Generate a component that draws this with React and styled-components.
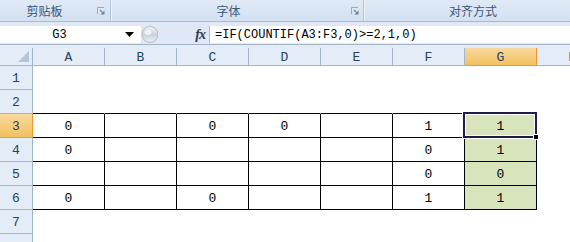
import React from "react";
import styled, { createGlobalStyle } from "styled-components";

const GlobalStyle = createGlobalStyle`
  html, body { margin: 0; padding: 0; background: #ffffff; overflow: hidden; }
  * { box-sizing: border-box; }
`;

const Page = styled.div`
  width: 570px;
  height: 242px;
  overflow: hidden;
  background: #ffffff;
`;

const Ribbon = styled.div`
  display: flex;
  height: 22px;
  background: linear-gradient(#e0eaf6, #d3e0f0);
  border-bottom: 1px solid #a7b8cf;
`;

const Group = styled.div`
  position: relative;
  flex: ${(p) => (p.$width ? `0 0 ${p.$width}px` : "1 1 auto")};
  display: flex;
  align-items: center;
  justify-content: center;
  padding-right: ${(p) => p.$padRight || 0}px;
  padding-left: ${(p) => p.$padLeft || 0}px;
  border-right: ${(p) => (p.$last ? "none" : "1px solid #b3c4da")};
  box-shadow: ${(p) => (p.$last ? "none" : "1px 0 0 #eef3fa")};
  font-family: "Noto Sans CJK SC", "Noto Sans", sans-serif;
  font-size: 12px;
  color: #3d5579;
`;

const Launcher = styled.svg`
  position: absolute;
  right: ${(p) => p.$right}px;
  top: 7px;
`;

const FormulaArea = styled.div`
  background: #dfe8f4;
  padding-top: 4px;
`;

const FormulaRow = styled.div`
  display: flex;
  height: 17px;
  align-items: stretch;
`;

const NameBox = styled.div`
  flex: 0 0 141px;
  background: #ffffff;
  display: flex;
  align-items: center;
  position: relative;
  font-family: "Liberation Mono", monospace;
  font-size: 12px;
  color: #000;
`;

const NameText = styled.span`
  flex: 1;
  text-align: center;
  padding-right: 22px;
`;

const DropArrow = styled.svg`
  position: absolute;
  right: 7px;
  top: 6px;
`;

const Knob = styled.svg`
  flex: 0 0 auto;
  margin-top: -1px;
`;

const FxCell = styled.div`
  flex: 0 0 52px;
  display: flex;
  align-items: center;
  justify-content: flex-end;
  padding-right: 4px;
  border-right: 1px solid #a9b9cf;
  font-family: "Liberation Serif", serif;
  font-style: italic;
  font-weight: bold;
  font-size: 14px;
  color: #2b3b5b;
  letter-spacing: -1px;
`;

const FormulaInput = styled.div`
  flex: 1;
  background: #ffffff;
  display: flex;
  align-items: center;
  padding-left: 5px;
  font-family: "Liberation Mono", monospace;
  font-size: 12px;
  color: #000;
  white-space: nowrap;
`;

const FormulaBottom = styled.div`
  height: 4px;
  border-top: 1px solid #a3b3c9;
  background: #e4ecf6;
  margin-top: 1px;
`;

const Sheet = styled.div`
  display: grid;
  grid-template-columns: 33px repeat(8, 72px);
  grid-template-rows: 18px repeat(8, 24px);
`;

const Corner = styled.div`
  background: #e4ecf7;
  border-right: 1px solid #9eb6ce;
  border-bottom: 1px solid #9eb6ce;
  position: relative;
`;

const CornerTri = styled.div`
  position: absolute;
  right: 3px;
  bottom: 3px;
  width: 0;
  height: 0;
  border-left: 11px solid transparent;
  border-bottom: 11px solid #b6c6da;
`;

const ColHead = styled.div`
  background: ${(p) =>
    p.$active ? "linear-gradient(#f9d99f, #f1c15f)" : "#e4ecf7"};
  border-right: 1px solid ${(p) => (p.$active ? "#f29536" : "#9eb6ce")};
  border-bottom: 1px solid ${(p) => (p.$active ? "#f29536" : "#9eb6ce")};
  display: flex;
  align-items: center;
  justify-content: center;
  font-family: "Liberation Mono", monospace;
  font-size: 13px;
  color: #27415f;
  padding-top: 1px;
`;

const RowHead = styled.div`
  background: ${(p) =>
    p.$active ? "linear-gradient(#f9d99f, #f1c15f)" : "#e4ecf7"};
  border-right: 1px solid ${(p) => (p.$active ? "#f29536" : "#9eb6ce")};
  border-bottom: 1px solid ${(p) => (p.$active ? "#f29536" : "#9eb6ce")};
  display: flex;
  align-items: flex-end;
  justify-content: center;
  padding-bottom: 3px;
  font-family: "Liberation Mono", monospace;
  font-size: 13px;
  color: #27415f;
`;

const Cell = styled.div`
  position: relative;
  background: ${(p) => (p.$fill ? "#d8e4bc" : "#ffffff")};
  border-right: 1px solid ${(p) => (p.$boxed ? "#000" : "transparent")};
  border-bottom: 1px solid
    ${(p) => (p.$boxed || p.$topEdge ? "#000" : "transparent")};
  display: flex;
  align-items: flex-end;
  justify-content: center;
  padding-bottom: 3px;
  font-family: "Liberation Mono", monospace;
  font-size: 13px;
  color: #000;
  z-index: ${(p) => (p.$selected ? 2 : 0)};
`;

const Selection = styled.div`
  position: absolute;
  left: -2px;
  top: -2px;
  right: -1px;
  bottom: -1px;
  border: 2px solid #1f1c4c;
  box-shadow: inset 0 0 0 1px #ffffff, 0 0 0 1px #ffffff;
  pointer-events: none;
`;

const Handle = styled.div`
  position: absolute;
  right: -4px;
  bottom: -4px;
  width: 6px;
  height: 6px;
  background: #000;
  border: 1px solid #ffffff;
`;

const COLS = ["A", "B", "C", "D", "E", "F", "G", "H"];

const DATA = {
  3: ["0", "", "0", "0", "", "1", "1"],
  4: ["0", "", "", "", "", "0", "1"],
  5: ["", "", "", "", "", "0", "0"],
  6: ["0", "", "0", "", "", "1", "1"],
};

function LauncherIcon({ right }) {
  return (
    <Launcher $right={right} width="8" height="8" viewBox="0 0 8 8">
      <path d="M0.5 7V0.5H7" fill="none" stroke="#9aa8bb" strokeWidth="1" />
      <path d="M3 3L6.5 6.5" stroke="#7d8ca3" strokeWidth="1.2" />
      <path d="M7.5 3.5V7.5H3.5Z" fill="#6f819c" />
    </Launcher>
  );
}

export default function App() {
  const rows = [1, 2, 3, 4, 5, 6, 7, 8];
  return (
    <Page>
      <GlobalStyle />
      <Ribbon>
        <Group $width={111} $padRight={21}>
          剪贴板
          <LauncherIcon right={5} />
        </Group>
        <Group $width={253} $padRight={17}>
          字体
          <LauncherIcon right={4} />
        </Group>
        <Group $last $padLeft={12}>
          对齐方式
        </Group>
      </Ribbon>
      <FormulaArea>
        <FormulaRow>
          <NameBox>
            <NameText>G3</NameText>
            <DropArrow width="9" height="5" viewBox="0 0 9 5">
              <path d="M0 0H9L4.5 5Z" fill="#000" />
            </DropArrow>
          </NameBox>
          <Knob width="17" height="19" viewBox="0 0 17 19">
            <defs>
              <linearGradient id="kg" x1="0" y1="0" x2="0" y2="1">
                <stop offset="0" stopColor="#f4f6f9" />
                <stop offset="0.5" stopColor="#c9d1dc" />
                <stop offset="1" stopColor="#eef2f7" />
              </linearGradient>
            </defs>
            <circle cx="9" cy="9.5" r="8" fill="url(#kg)" stroke="#b3bccb" />
            <ellipse cx="7" cy="7.5" rx="3.5" ry="2.5" fill="#ffffff" opacity="0.7" />
          </Knob>
          <FxCell>fx</FxCell>
          <FormulaInput>=IF(COUNTIF(A3:F3,0)&gt;=2,1,0)</FormulaInput>
        </FormulaRow>
        <FormulaBottom />
      </FormulaArea>
      <Sheet>
        <Corner>
          <CornerTri />
        </Corner>
        {COLS.map((c) => (
          <ColHead key={c} $active={c === "G"}>
            {c}
          </ColHead>
        ))}
        {rows.map((r) => (
          <React.Fragment key={r}>
            <RowHead $active={r === 3}>{r < 8 ? r : ""}</RowHead>
            {COLS.map((c, ci) => {
              const boxed = DATA[r] && ci < 7;
              const selected = r === 3 && c === "G";
              return (
                <Cell
                  key={c}
                  $boxed={boxed}
                  $topEdge={r === 2 && ci < 7}
                  $fill={boxed && c === "G"}
                  $selected={selected}
                >
                  {boxed ? DATA[r][ci] : ""}
                  {selected && (
                    <Selection>
                      <Handle />
                    </Selection>
                  )}
                </Cell>
              );
            })}
          </React.Fragment>
        ))}
      </Sheet>
    </Page>
  );
}
